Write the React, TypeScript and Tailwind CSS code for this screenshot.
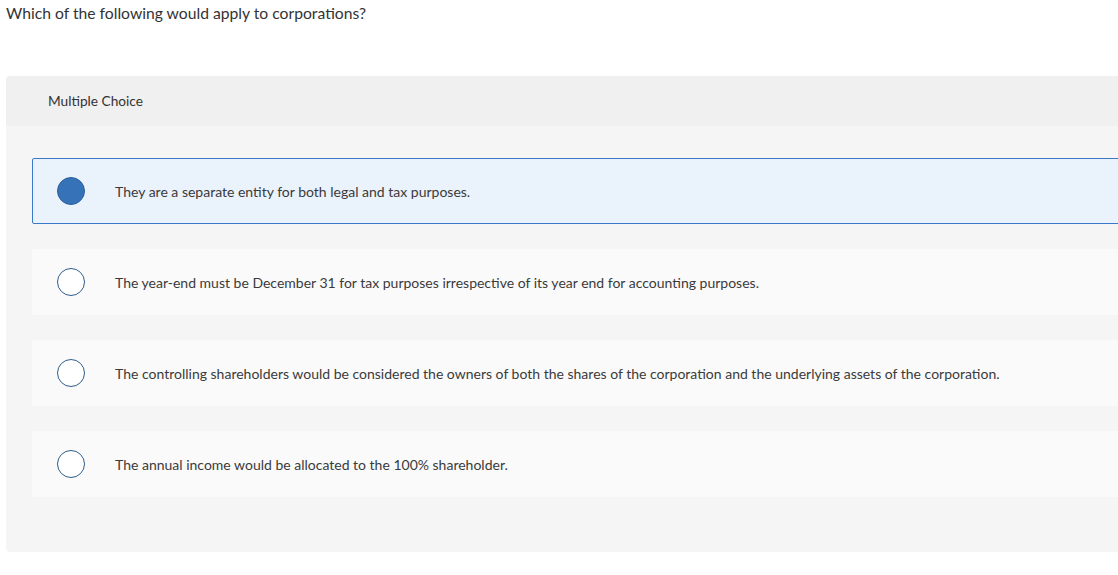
import React from "react";

const options = [
  "They are a separate entity for both legal and tax purposes.",
  "The year-end must be December 31 for tax purposes irrespective of its year end for accounting purposes.",
  "The controlling shareholders would be considered the owners of both the shares of the corporation and the underlying assets of the corporation.",
  "The annual income would be allocated to the 100% shareholder.",
];

export default function App() {
  return (
    <div className="w-[1118px] h-[575px] overflow-hidden bg-white text-[#333333]" style={{ fontFamily: "Lato, 'Open Sans', sans-serif" }}>
      <div className="pl-[6px] pt-[3px] text-[15.7px] leading-[20px]">Which of the following would apply to corporations?</div>
      <div className="ml-[6px] mt-[53px] w-[1140px] rounded-[4px] bg-[#f5f5f5]">
        <div className="h-[50px] bg-[#f0f0f0] pl-[42px] pt-[1px] flex items-center text-[13.7px] rounded-t-[4px]">Multiple Choice</div>
        <div className="pt-[32px] pb-[55px] pl-[26px] flex flex-col gap-[25px]">
          {options.map((o, i) => (
            <div
              key={i}
              className={
                i === 0
                  ? "h-[66px] flex items-center rounded-[2px] border border-[#3b78c8] bg-[#eaf2fb]"
                  : "h-[66px] flex items-center rounded-[2px] border border-[#fafafa] bg-[#fafafa]"
              }
            >
              <div className="pl-[24px] pr-[30px] flex items-center">
                {i === 0 ? (
                  <div className="w-[28px] h-[28px] rounded-full bg-[#3672b8] border border-[#2c5f9b]" />
                ) : (
                  <div className="w-[28px] h-[28px] rounded-full bg-white border-[1.5px] border-[#2f5c8b]" />
                )}
              </div>
              <div className="text-[14px] text-[#3a3a3a]">{o}</div>
            </div>
          ))}
        </div>
      </div>
    </div>
  );
}
